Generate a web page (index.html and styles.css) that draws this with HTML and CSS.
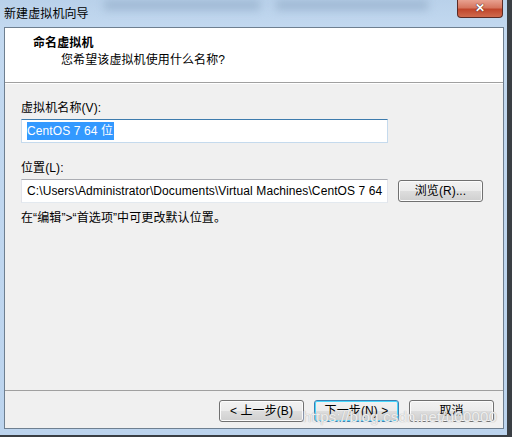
FILE: index.html
```
<!DOCTYPE html>
<html>
    <head>
        <meta charset="utf-8">
        <link rel="stylesheet" href="styles.css">
    </head>
    <body>
        <div class="window">
            <div class="titlebar">
                <div class="blur b1"></div>
                <div class="blur b2"></div>
                <span class="caption">新建虚拟机向导</span>
                <div class="close">&#x2715;</div>
            </div>
            <div class="client">
                <div class="header">
                    <div class="head_title">命名虚拟机</div>
                    <div class="head_sub">您希望该虚拟机使用什么名称?</div>
                </div>
                <div class="content">
                    <div class="lbl">虚拟机名称(V):</div>
                    <div class="textbox focused"><span class="sel">CentOS 7 64 位</span></div>

                    <div class="lbl second">位置(L):</div>
                    <div class="row">
                        <div class="textbox">C:\Users\Administrator\Documents\Virtual Machines\CentOS 7 64</div>
                        <div class="btn browse">浏览(R)...</div>
                    </div>
                    <div class="hint">在“编辑”&gt;“首选项”中可更改默认位置。</div>
                </div>
                <div class="footer">
                    <div class="btn">&lt; 上一步(B)</div>
                    <div class="btn default">下一步(N) &gt;</div>
                    <div class="btn">取消</div>
                    <div class="watermark">https://blog.csdn.net/u00000</div>
                </div>
            </div>
        </div>
    </body>
</html>
```

FILE: styles.css
```
body {
    margin: 0;
    width: 512px;
    height: 437px;
    background: #3a3f44;
    font-family: "Liberation Sans", "Noto Sans CJK SC", sans-serif;
    font-size: 12px;
    letter-spacing: 0.1px;
    color: #000;
    overflow: hidden;
}

.window {
    width: 507px;
    height: 435px;
    background: linear-gradient(to bottom, #b9d1ea 0px, #c3d9f0 30px, #bcd4ee 100%);
    display: flex;
    flex-direction: column;
}

.titlebar {
    position: relative;
    height: 27px;
    display: flex;
    align-items: flex-start;
    justify-content: space-between;
}

.blur {
    position: absolute;
    top: 0;
    height: 10px;
    background: #9fb8d3;
    filter: blur(4px);
}
.b1 { left: 104px; width: 156px; }
.b2 { left: 276px; width: 152px; }

.caption {
    position: relative;
    margin: 5px 0 0 4px;
    line-height: 18px;
    color: #000;
}

.close {
    position: relative;
    width: 44px;
    height: 17px;
    margin-right: 4px;
    border: 1px solid #5a2b26;
    border-top: none;
    border-radius: 0 0 4px 4px;
    background: linear-gradient(to bottom, #e8a190 0%, #d6765f 45%, #c0462c 55%, #d06a4e 100%);
    color: #fff;
    font-size: 12px;
    font-weight: bold;
    line-height: 16px;
    text-align: center;
    text-shadow: 0 0 1px #4a1a10, 0 0 1px #4a1a10;
}

.client {
    margin: 0 3px 0 4px;
    height: 400px;
    border: 1px solid #6e7f90;
    background: #f0f0f0;
    display: flex;
    flex-direction: column;
}

.header {
    height: 54px;
    background: #fff;
    border-bottom: 1px solid #a0a0a0;
    box-shadow: 0 1px 0 #fff;
}

.head_title {
    margin: 7px 0 0 28px;
    font-weight: bold;
    line-height: 17px;
}

.head_sub {
    margin: 0 0 0 56px;
    line-height: 17px;
}

.content {
    flex: 1;
    padding: 17px 0 0 16px;
}

.lbl {
    line-height: 16px;
    margin-bottom: 3px;
}
.second {
    margin-top: 17px;
}

.row {
    display: flex;
    align-items: center;
}

.textbox {
    width: 355px;
    height: 22px;
    padding: 0 5px;
    background: #fff;
    border: 1px solid #e2e3ea;
    border-top-color: #abadb3;
    border-bottom-color: #e3e9ef;
    line-height: 22px;
    white-space: nowrap;
    overflow: hidden;
    color: #000;
}
.focused {
    border-color: #c5daed;
    border-top-color: #3d7bad;
}

.sel {
    background: #3399ff;
    color: #fff;
    padding: 2px 1px 2px 0;
}

.btn {
    width: 83px;
    height: 20px;
    border: 1px solid #707070;
    border-radius: 3px;
    background: linear-gradient(to bottom, #f2f2f2 0%, #ebebeb 50%, #dddddd 51%, #cfcfcf 100%);
    box-shadow: inset 0 0 0 1px #fcfcfc;
    text-align: center;
    line-height: 20px;
}

.browse {
    margin-left: 10px;
}

.hint {
    margin-top: 7px;
    line-height: 17px;
}

.footer {
    position: relative;
    height: 38px;
    border-top: 1px solid #a0a0a0;
    display: flex;
    justify-content: flex-end;
    align-items: flex-start;
    gap: 10px;
    padding: 9px 9px 0 0;
    box-sizing: border-box;
}

.default {
    border-color: #3c7fb1;
    box-shadow: inset 0 0 0 1px #49d8fe;
}

.watermark {
    position: absolute;
    left: 298px;
    top: 17px;
    font-family: "Liberation Sans", sans-serif;
    font-size: 15px;
    color: rgba(255, 255, 255, 0.75);
    text-shadow: 0 0 1px #bbb, 0 0 1px #bbb;
    letter-spacing: 0.2px;
}
```
